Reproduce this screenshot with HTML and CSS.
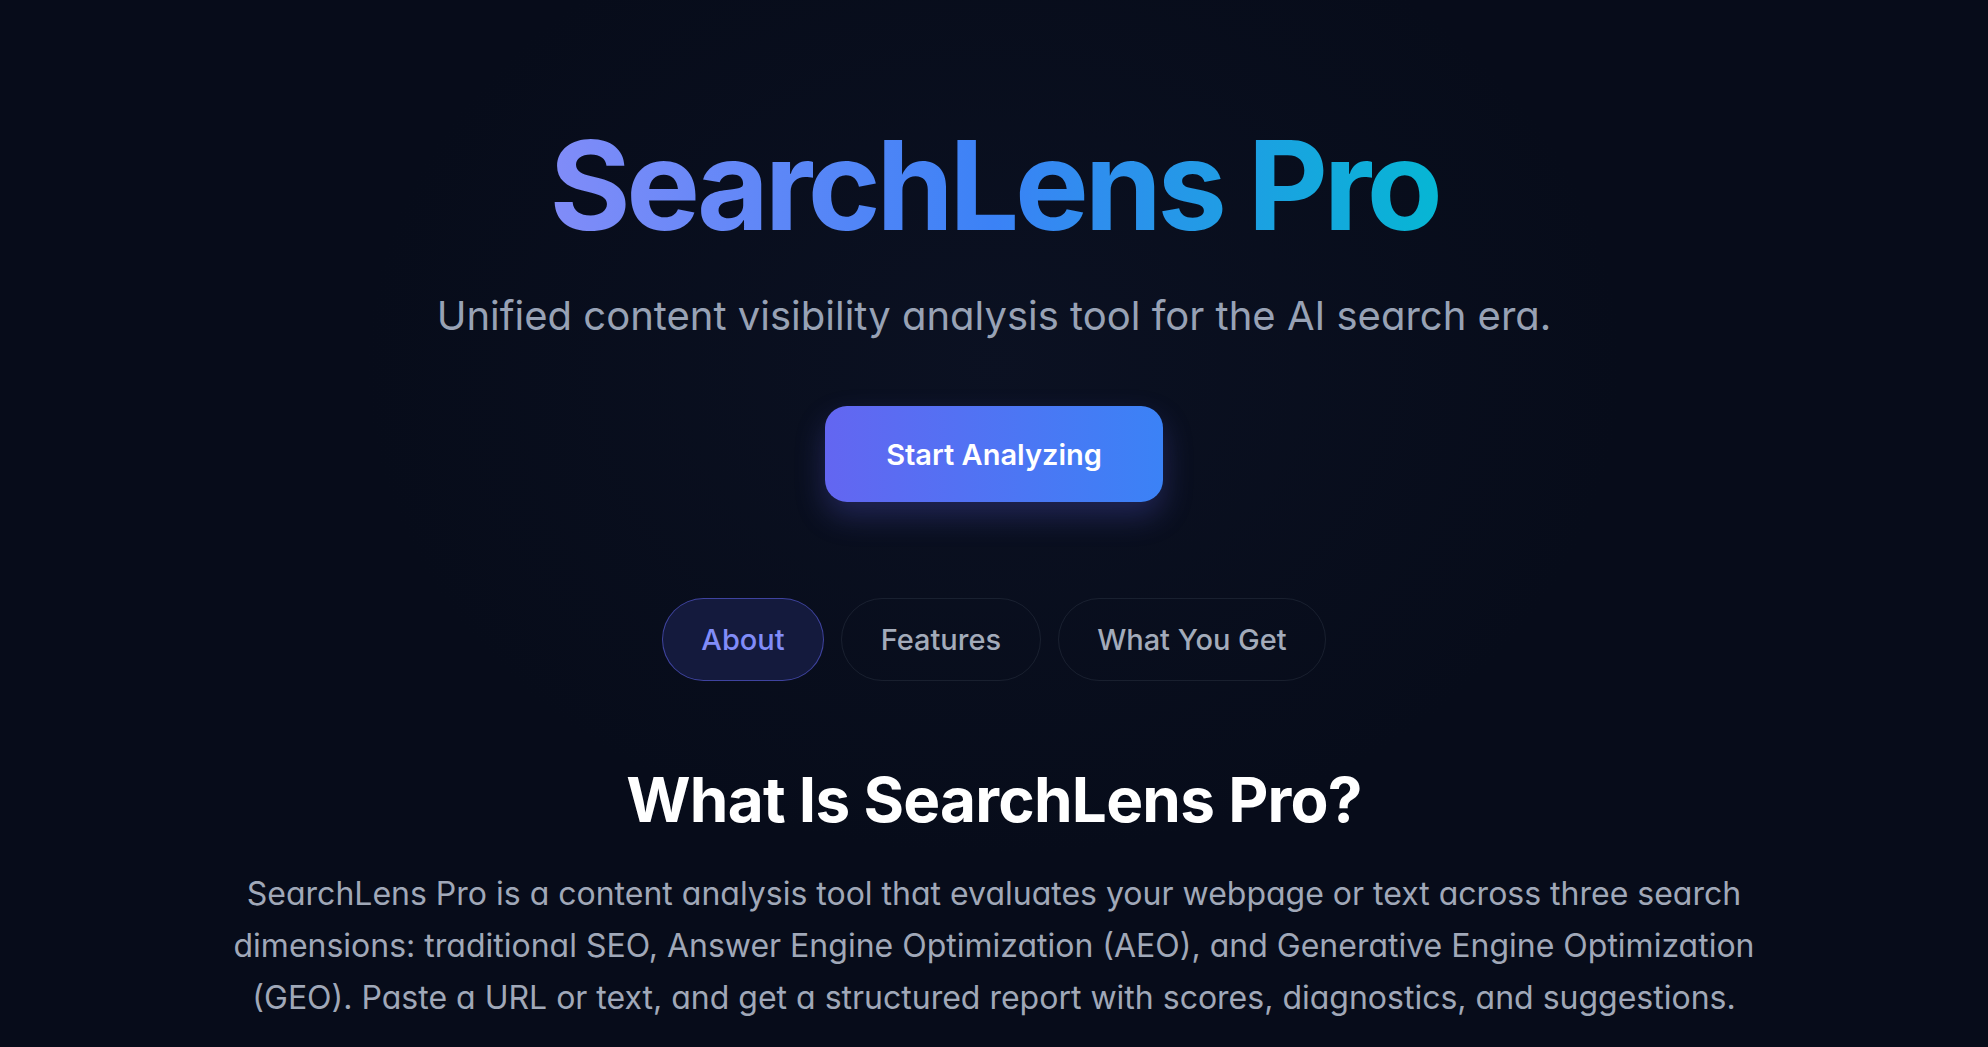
FILE: index.html
```html
<!DOCTYPE html>
<html lang="en">
<head>
<meta charset="utf-8">
<title>SearchLens Pro</title>
<link rel="stylesheet" href="styles.css">
</head>
<body>
<main class="page">
  <section class="hero">
    <h1 class="title">SearchLens Pro</h1>
    <p class="subtitle">Unified content visibility analysis tool for the AI search era.</p>
    <button class="cta" type="button">Start Analyzing</button>
  </section>
  <nav class="tabs">
    <button class="tab active" type="button">About</button>
    <button class="tab" type="button">Features</button>
    <button class="tab" type="button">What You Get</button>
  </nav>
  <section class="about">
    <h2 class="about-title">What Is SearchLens Pro?</h2>
    <p class="about-text">SearchLens Pro is a content analysis tool that evaluates your webpage or text across three search dimensions: traditional SEO, Answer Engine Optimization (AEO), and Generative Engine Optimization (GEO). Paste a URL or text, and get a structured report with scores, diagnostics, and suggestions.</p>
  </section>
</main>
</body>
</html>
```
FILE: styles.css
```css
* { box-sizing: border-box; }
html, body { margin: 0; padding: 0; }
body {
  min-height: 100vh;
  background-color: #070c1a;
  background-image:
    radial-gradient(ellipse 900px 700px at 50% 35%, rgba(20, 28, 52, 0.3), rgba(7, 12, 26, 0) 70%);
  font-family: Inter, "Noto Sans", "Liberation Sans", sans-serif;
  color: #e2e8f0;
  overflow: hidden;
}
.page {
  display: flex;
  flex-direction: column;
  align-items: center;
  padding-top: 123px;
}
.hero {
  display: flex;
  flex-direction: column;
  align-items: center;
}
.title {
  margin: 0;
  font-size: 124px;
  line-height: 124px;
  font-weight: 700;
  letter-spacing: -0.035em;
  background: linear-gradient(90deg, #818cf8 0%, #3b82f6 50%, #06b6d4 100%);
  -webkit-background-clip: text;
  background-clip: text;
  color: transparent;
}
.subtitle {
  margin: 39px 0 0;
  font-size: 40px;
  line-height: 60px;
  font-weight: 400;
  color: #98a2b5;
  font-feature-settings: "cv11";
}
.cta {
  margin-top: 60px;
  height: 96px;
  padding: 0 61px;
  border: none;
  border-radius: 22px;
  background: linear-gradient(90deg, #6366f1 0%, #3b82f6 100%);
  color: #ffffff;
  font-family: inherit;
  font-size: 29px;
  font-weight: 600;
  box-shadow: 0 14px 30px rgba(99, 102, 241, 0.26);
  cursor: pointer;
}
.tabs {
  display: flex;
  gap: 17px;
  margin-top: 96px;
}
.tab {
  height: 83px;
  padding: 0 38.5px;
  border: 1.5px solid rgba(148, 163, 184, 0.12);
  border-radius: 42px;
  background: transparent;
  color: #a3abba;
  font-family: inherit;
  font-size: 29px;
  font-weight: 500;
  cursor: pointer;
}
.tab.active {
  background: #141a3d;
  border-color: rgba(99, 102, 241, 0.55);
  color: #818cf8;
}
.about {
  display: flex;
  flex-direction: column;
  align-items: center;
  margin-top: 83px;
}
.about-title {
  margin: 0;
  font-size: 62px;
  line-height: 72px;
  font-weight: 700;
  letter-spacing: -0.012em;
  color: #ffffff;
}
.about-text {
  margin: 32px 0 0;
  max-width: 1560px;
  text-align: center;
  font-size: 32px;
  line-height: 52px;
  color: #a0a8b8;
  font-feature-settings: "cv11";
}
```
